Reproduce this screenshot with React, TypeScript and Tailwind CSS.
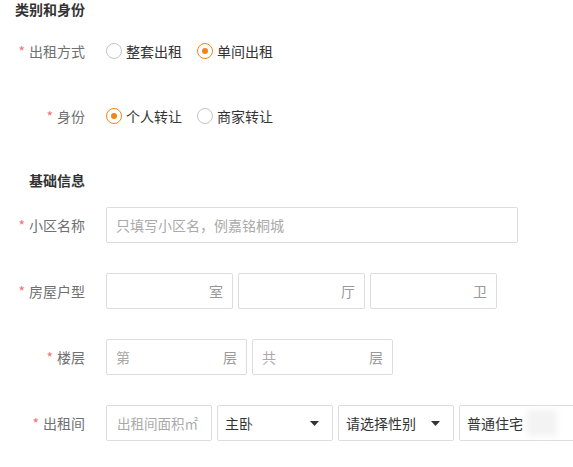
import React from "react";

const font = {
  fontFamily: '"Microsoft YaHei", "Noto Sans CJK SC", "Liberation Sans", sans-serif',
};

function Label({ text, required = true }: { text: string; required?: boolean }) {
  return (
    <div className="w-[85px] shrink-0 text-right text-[14px] leading-[20px] text-[#707070]">
      {required && <span className="mr-[4px] text-[#ef7373]">*</span>}
      {text}
    </div>
  );
}

function Radio({ label, checked }: { label: string; checked?: boolean }) {
  return (
    <label className="flex items-center gap-[4px] text-[14px] text-[#333]">
      <span
        className={`flex h-[16px] w-[16px] items-center justify-center rounded-full border ${
          checked ? "border-[#f08519]" : "border-[#c4c4c4]"
        }`}
      >
        {checked && <span className="h-[6px] w-[6px] rounded-full bg-[#f08519]" />}
      </span>
      {label}
    </label>
  );
}

function Box({
  width,
  prefix,
  suffix,
  placeholder,
}: {
  width: string;
  prefix?: string;
  suffix?: string;
  placeholder?: string;
}) {
  return (
    <div
      className={`${width} flex h-[36px] shrink-0 items-center justify-between rounded-[2px] border border-[#ddd] bg-white px-[9px] text-[14px]`}
    >
      <span className="text-[#aaa]">{prefix ?? placeholder ?? ""}</span>
      {suffix && <span className="text-[#999]">{suffix}</span>}
    </div>
  );
}

function Select({ value }: { value: string }) {
  return (
    <div className="flex h-[36px] w-[116px] shrink-0 items-center justify-between rounded-[2px] border border-[#ddd] bg-white pl-[7px] pr-[13px] text-[14px]">
      <span className="text-[#333]">{value}</span>
      <svg width="9" height="5" viewBox="0 0 9 5">
        <path d="M0 0h9L4.5 5z" fill="#333" />
      </svg>
    </div>
  );
}

export default function App() {
  return (
    <div className="w-[573px] h-[467px] overflow-hidden bg-white" style={font}>
      <div className="flex flex-col pt-[1px]">
        <div className="w-[85px] text-right text-[14px] font-bold leading-[16px] text-[#333]">
          类别和身份
        </div>

        <div className="mt-[16px] flex h-[36px] items-center">
          <Label text="出租方式" />
          <div className="ml-[21px] flex items-center gap-[15px]">
            <Radio label="整套出租" />
            <Radio label="单间出租" checked />
          </div>
        </div>

        <div className="mt-[29px] flex h-[36px] items-center">
          <Label text="身份" />
          <div className="ml-[21px] flex items-center gap-[15px]">
            <Radio label="个人转让" checked />
            <Radio label="商家转让" />
          </div>
        </div>

        <div className="mt-[36px] w-[85px] text-right text-[14px] font-bold leading-[20px] text-[#333]">
          基础信息
        </div>

        <div className="mt-[17px] flex h-[36px] items-center">
          <Label text="小区名称" />
          <div className="ml-[21px] flex">
            <Box width="w-[412px]" placeholder="只填写小区名，例嘉铭桐城" />
          </div>
        </div>

        <div className="mt-[30px] flex h-[36px] items-center">
          <Label text="房屋户型" />
          <div className="ml-[21px] flex gap-[5px]">
            <Box width="w-[127px]" suffix="室" />
            <Box width="w-[127px]" suffix="厅" />
            <Box width="w-[127px]" suffix="卫" />
          </div>
        </div>

        <div className="mt-[30px] flex h-[36px] items-center">
          <Label text="楼层" />
          <div className="ml-[21px] flex gap-[5px]">
            <Box width="w-[141px]" prefix="第" suffix="层" />
            <Box width="w-[141px]" prefix="共" suffix="层" />
          </div>
        </div>

        <div className="mt-[30px] flex h-[36px] items-center">
          <Label text="出租间" />
          <div className="ml-[21px] flex gap-[5px]">
            <div className="flex h-[36px] w-[106px] shrink-0 items-center rounded-[2px] border border-[#ddd] pl-[10px] text-[13.5px] text-[#aaa]">
              出租间面积㎡
            </div>
            <Select value="主卧" />
            <Select value="请选择性别" />
            <div className="flex h-[36px] w-[116px] shrink-0 items-center rounded-[2px] border border-[#ddd] pl-[7px] text-[14px] text-[#333]">
              普通住宅
              <span className="ml-[4px] h-[26px] w-[30px] bg-[#f3f3f3] blur-[3px]" />
            </div>
          </div>
        </div>
      </div>
    </div>
  );
}
